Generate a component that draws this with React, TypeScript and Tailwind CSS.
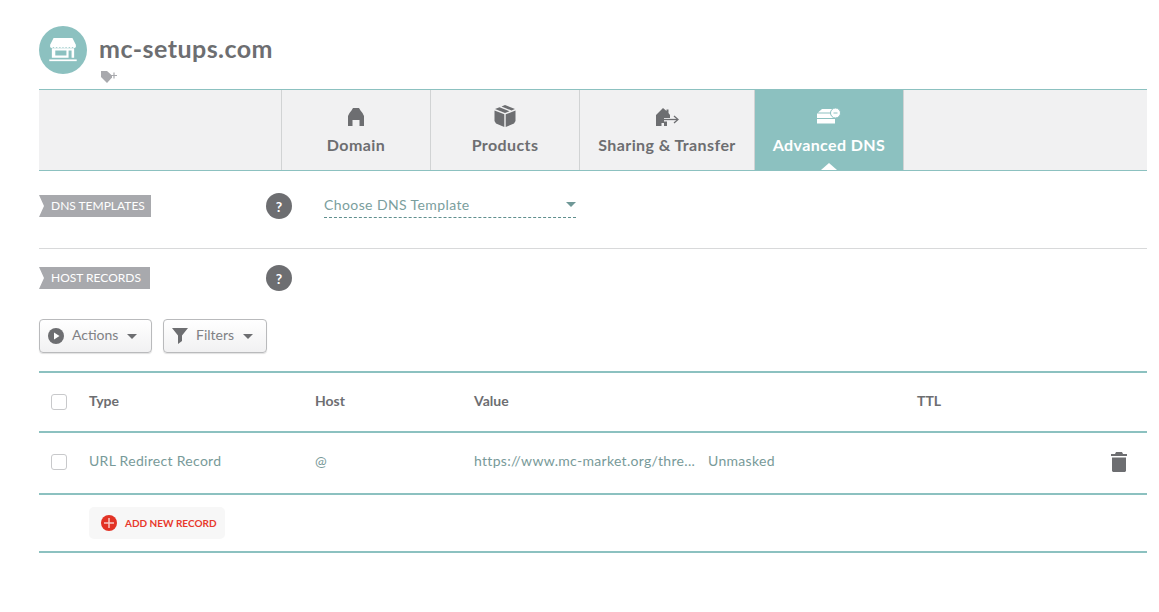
function StoreIcon() {
  return (
    <svg width="28" height="24" viewBox="0 0 32 28" fill="#fff">
      <path d="M5 0h22l4 8v2.500c-1 1.400-3 1.400-3.800 0-.9 1.400-3 1.400-3.800 0-.9 1.400-3 1.400-3.800 0-.9 1.400-3 1.400-3.600 0-.7 1.400-2.900 1.400-3.600 0-.9 1.400-3 1.400-3.800 0-.9 1.400-3 1.400-3.800 0-.8 1.400-2.800 1.400-3.800 0V8z" />
      <path fillRule="evenodd" d="M3 12h26v11H3zM7 14.500v6h13v-6zM22.500 14.500V23h3.500v-8.500z" />
      <rect x="0" y="25" width="32" height="2" />
    </svg>
  );
}

function TagPlusIcon() {
  return (
    <svg width="18" height="14" viewBox="0 0 18 14">
      <path d="M1 1h6l5 4.500v2L7 13 1 7z" fill="#a8a9ad" />
      <path d="M11 5.500h6M14 2.500v6" stroke="#a8a9ad" strokeWidth="1.200" />
    </svg>
  );
}

function HomeIcon() {
  return (
    <svg width="16" height="18" viewBox="0 0 16 18" fill="#6d6e71" className="mt-[1px]">
      <path d="M5 0h6l1.500 2.500L14.500 5 16 8v10h-4.500v-6h-7v6H0V8l1.500-3 2-2.500z" />
    </svg>
  );
}

function BoxIcon() {
  return (
    <svg width="22" height="22" viewBox="0 0 22 22">
      <path d="M11 0l10 4-3.500 1.500-10-4zM5.500 2.300l10 4L11 8 1 4z" fill="#6d6e71" />
      <path d="M0.500 5.500L10.300 9.300V22L2 18.500 0.500 16zM21.500 5.500L11.700 9.300V22L20 18.500l1.500-2.500z" fill="#6d6e71" />
    </svg>
  );
}

function ShareIcon() {
  return (
    <svg width="23" height="18" viewBox="0 0 23 18" fill="#6d6e71" className="mt-[1px]">
      <path d="M7 0l3.500 3V1.500h2v3.500L14 7v3H8v1.500h6V12H8v1.500h3V18H8v-3H5.500v3H0V7z" />
      <path d="M8 11.500h13" stroke="#6d6e71" strokeWidth="1.300" />
      <path d="M18 8l4 3.500-4 3.500" fill="none" stroke="#6d6e71" strokeWidth="1.300" />
    </svg>
  );
}

function DnsIcon() {
  return (
    <svg width="24" height="16" viewBox="0 0 24 16" fill="#fff">
      <path d="M5 1h11l2 3.500H1z" />
      <rect x="0" y="5.500" width="18" height="4.500" />
      <rect x="0" y="11" width="18" height="4.500" />
      <circle cx="18.500" cy="5" r="5" stroke="#8cc1c0" strokeWidth="1" />
      <path d="M16.500 5h4" stroke="#8cc1c0" strokeWidth="1" />
    </svg>
  );
}

function HelpBadge() {
  return (
    <div className="flex h-[26px] w-[26px] items-center justify-center rounded-full bg-[#6d6e71] text-[14px] font-bold text-white">
      ?
    </div>
  );
}

function SectionLabel({ children, width }: { children: string; width: string }) {
  return (
    <div
      className={`flex h-[22px] items-center bg-[#a8a9ad] pl-3 text-[12px] text-white [clip-path:polygon(0_0,100%_0,100%_100%,0_100%,5px_50%)] ${width}`}
    >
      {children}
    </div>
  );
}

function Caret({ color = 'border-t-[#6d6e71]' }: { color?: string }) {
  return <span className={`block h-0 w-0 border-x-[5.500px] border-t-[5.500px] border-x-transparent ${color}`} />;
}

function Tab({ icon, label, width, active }: { icon: React.ReactNode; label: string; width: string; active?: boolean }) {
  return (
    <div
      className={`relative flex h-full flex-col items-center ${width} ${
        active ? 'bg-[#8cc1c0] text-white' : 'border-l border-[#d1d3d4] text-[#6d6e71]'
      }`}
    >
      <div className="mt-[13px] flex h-[26px] items-center justify-center">{icon}</div>
      <div className="mt-1 text-[16px] leading-[24px] font-bold tracking-[0.4px] whitespace-nowrap">{label}</div>
      {active && (
        <span className="absolute bottom-0 left-1/2 h-0 w-0 -translate-x-1/2 border-x-[8px] border-b-[7px] border-x-transparent border-b-white" />
      )}
    </div>
  );
}

function Checkbox() {
  return <div className="h-4 w-4 rounded-[3px] border border-[#c8c9cb] bg-white" />;
}

function ToolButton({ icon, label, width }: { icon: React.ReactNode; label: string; width: string }) {
  return (
    <div
      className={`flex h-[34px] items-center rounded-[4px] border border-[#b9babc] bg-gradient-to-b from-white to-[#f1f1f2] pl-2 text-[14px] text-[#808184] shadow-[0_1px_1px_rgba(0,0,0,0.12)] ${width}`}
    >
      {icon}
      <span className="ml-2 pb-[4px]">{label}</span>
      <span className="ml-[9px]">
        <Caret />
      </span>
    </div>
  );
}

export default function App() {
  return (
    <div className="h-[612px] w-[1159px] overflow-hidden bg-white pr-3 pl-[39px] font-['Lato',sans-serif] text-[#6d6e71]">
      <div className="flex h-[89px] pt-[26px]">
        <div className="flex h-12 w-12 items-center justify-center rounded-full bg-[#8cc1c0]">
          <StoreIcon />
        </div>
        <div className="ml-3">
          <h1 className="mt-2 text-[25px] leading-[28px] font-bold tracking-[0.45px] text-[#6d6e71]">mc-setups.com</h1>
          <div className="mt-2 ml-[1px]">
            <TagPlusIcon />
          </div>
        </div>
      </div>

      <div className="flex h-[82px] border-y border-[#8cc1c0] bg-[#f1f1f2]">
        <div className="w-[242px]" />
        <Tab icon={<HomeIcon />} label="Domain" width="w-[149px]" />
        <Tab icon={<BoxIcon />} label="Products" width="w-[149px]" />
        <Tab icon={<ShareIcon />} label="Sharing & Transfer" width="w-[175px]" />
        <div className="w-px bg-[#d1d3d4]" />
        <Tab icon={<DnsIcon />} label="Advanced DNS" width="w-[148px]" active />
        <div className="w-px bg-[#d1d3d4]" />
      </div>

      <div className="flex h-[78px] items-start border-b border-[#d8d9da] pt-6">
        <div className="w-[227px]">
          <SectionLabel width="w-[112px]">DNS TEMPLATES</SectionLabel>
        </div>
        <div className="-mt-[2px]">
          <HelpBadge />
        </div>
        <div className="ml-8 flex h-[23px] w-[252px] items-center justify-between border-b border-dashed border-[#5f8f8e] pb-[3px] text-[14px] tracking-[0.4px] text-[#7a9e9d]">
          <span>Choose DNS Template</span>
          <Caret color="border-t-[#6f9897]" />
        </div>
      </div>

      <div className="flex h-[70px] items-start pt-[18px]">
        <div className="w-[227px]">
          <SectionLabel width="w-[111px]">HOST RECORDS</SectionLabel>
        </div>
        <div className="-mt-[2px]">
          <HelpBadge />
        </div>
      </div>

      <div className="flex gap-[11px]">
        <ToolButton
          width="w-[113px]"
          label="Actions"
          icon={
            <svg width="16" height="16" viewBox="0 0 16 16">
              <circle cx="8" cy="8" r="8" fill="#6d6e71" />
              <path d="M6 4.500l5.500 3.500L6 11.500z" fill="#fff" />
            </svg>
          }
        />
        <ToolButton
          width="w-[104px]"
          label="Filters"
          icon={
            <svg width="16" height="16" viewBox="0 0 16 16" fill="#6d6e71">
              <path d="M0 0h16L10 7.500V13l-4 3V7.500z" />
            </svg>
          }
        />
      </div>

      <div className="mt-[18px] border-t-2 border-[#8cc1c0]">
        <div className="flex h-[60px] items-center border-b-2 border-[#8cc1c0] text-[14px] font-bold">
          <div className="w-[50px] pl-3">
            <Checkbox />
          </div>
          <div className="w-[226px] pb-[3px]">Type</div>
          <div className="w-[159px] pb-[3px]">Host</div>
          <div className="w-[443px] pb-[3px]">Value</div>
          <div className="pb-[3px]">TTL</div>
        </div>
        <div className="flex h-[62px] items-center border-b-2 border-[#8cc1c0] text-[14px] tracking-[0.3px] text-[#789a99]">
          <div className="w-[50px] pl-3 pb-[2px]">
            <Checkbox />
          </div>
          <div className="w-[226px] pb-[5px]">URL Redirect Record</div>
          <div className="w-[159px] pb-[5px]">@</div>
          <div className="w-[234px] pb-[5px] whitespace-nowrap">https://www.mc-market.org/thre...</div>
          <div className="flex-1 pb-[5px]">Unmasked</div>
          <div className="mr-5 pb-[3px]">
            <svg width="16" height="20" viewBox="0 0 16 20" fill="#6d6e71" className="block">
              <path d="M5 0h6l1 2h4v2H0V2h4z" />
              <path d="M1 5.500h14V19l-1 1H2l-1-1z" />
            </svg>
          </div>
        </div>
        <div className="flex h-[58px] items-center border-b-2 border-[#8cc1c0] pl-[50px]">
          <div className="flex h-8 w-[136px] items-center rounded-[5px] bg-[#f7f7f7] pl-3 text-[10px] font-bold text-[#e8392c]">
            <span className="mr-2 flex h-4 w-4 items-center justify-center rounded-full bg-[#e23325]">
              <svg width="10" height="10" viewBox="0 0 10 10">
                <path d="M5 0v10M0 5h10" stroke="#f7c9c4" strokeWidth="1.500" />
              </svg>
            </span>
            ADD NEW RECORD
          </div>
        </div>
      </div>
    </div>
  );
}
